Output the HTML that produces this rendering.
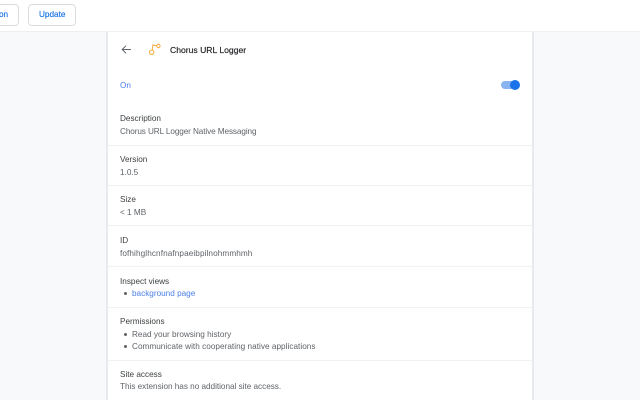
<!DOCTYPE html>
<html><head><meta charset="utf-8"><style>
html,body{margin:0;padding:0;width:640px;height:400px;overflow:hidden;background:#f8f9fa}
body{position:relative;font-family:"Liberation Sans",sans-serif;font-size:8.2px;color:#5f6368}
.a{position:absolute;white-space:nowrap;line-height:12px}
.l{color:#3c4043;left:120px}
.v{color:#5f6368;left:120px}
.hr{position:absolute;left:108px;width:424px;height:1px;background:#f1f2f3}
.btn{position:absolute;top:4px;height:20px;border:1px solid #dadce0;border-radius:4px;background:#fff;box-sizing:content-box}
.d{position:absolute;left:124px;width:3px;height:3px;border-radius:50%;background:#5f6368}
</style></head><body>
<div style="position:absolute;left:0;top:0;width:640px;height:32px;background:#fff;border-bottom:1px solid #eeeff1;box-sizing:border-box"></div>
<div class="btn" style="left:-30px;width:47px"></div>
<div class="btn" style="left:28px;width:46px"></div>
<div class="a" style="left:-1px;top:9px;color:#1a73e8;-webkit-text-stroke:.15px #1a73e8">on</div>
<div class="a" style="left:39px;top:9px;color:#1a73e8;-webkit-text-stroke:.15px #1a73e8">Update</div>
<div style="position:absolute;left:106px;top:32px;width:428px;height:368px;background:#fff;border-left:2px solid #e8eaed;border-right:2px solid #e8eaed;box-sizing:border-box"></div>
<svg style="position:absolute;left:120px;top:43px" width="13" height="13" viewBox="0 0 13 13"><path d="M11 6.5H2.4M6 2.7L2.2 6.5L6 10.3" fill="none" stroke="#5f6368" stroke-width="1"/></svg>
<svg style="position:absolute;left:147px;top:42px" width="16" height="16" viewBox="0 0 16 16" fill="none" stroke="#f9ab3c" stroke-width="1"><circle cx="4.7" cy="10.3" r="2.2"/><circle cx="11.4" cy="4" r="1.7"/><path d="M5.2 8.2L5.9 3L9.7 3.8"/></svg>
<div class="a" style="left:170px;top:44px;color:#202124;font-size:8.6px;-webkit-text-stroke:.15px #202124">Chorus URL Logger</div>
<div class="a" style="left:120px;top:80px;color:#4a7ee8">On</div>
<div style="position:absolute;left:501px;top:81px;width:16px;height:7.5px;border-radius:4px;background:#8ab4f0"></div>
<div style="position:absolute;left:510px;top:80px;width:10px;height:10px;border-radius:50%;background:#1a73e8"></div>
<div class="a l" style="top:113px">Description</div>
<div class="a v" style="top:126px;letter-spacing:-.1px">Chorus URL Logger Native Messaging</div>
<div class="hr" style="top:145px"></div>
<div class="a l" style="top:154px">Version</div>
<div class="a v" style="top:167px">1.0.5</div>
<div class="hr" style="top:185px"></div>
<div class="a l" style="top:194px">Size</div>
<div class="a v" style="top:207px">&lt; 1 MB</div>
<div class="hr" style="top:225px"></div>
<div class="a l" style="top:235px">ID</div>
<div class="a v" style="top:248px;letter-spacing:.1px">fofhihglhcnfnafnpaeibpilnohmmhmh</div>
<div class="hr" style="top:266px"></div>
<div class="a l" style="top:276px">Inspect views</div>
<div class="d" style="top:292px"></div>
<div class="a" style="left:132px;top:288px;color:#4a7ee8">background page</div>
<div class="hr" style="top:307px"></div>
<div class="a l" style="top:316px">Permissions</div>
<div class="d" style="top:333px"></div>
<div class="a v" style="left:132px;top:329px">Read your browsing history</div>
<div class="d" style="top:345px"></div>
<div class="a v" style="left:132px;top:341px;letter-spacing:.03px">Communicate with cooperating native applications</div>
<div class="hr" style="top:360px"></div>
<div class="a l" style="top:369px">Site access</div>
<div class="a v" style="top:381px;letter-spacing:-.02px">This extension has no additional site access.</div>
</body></html>
